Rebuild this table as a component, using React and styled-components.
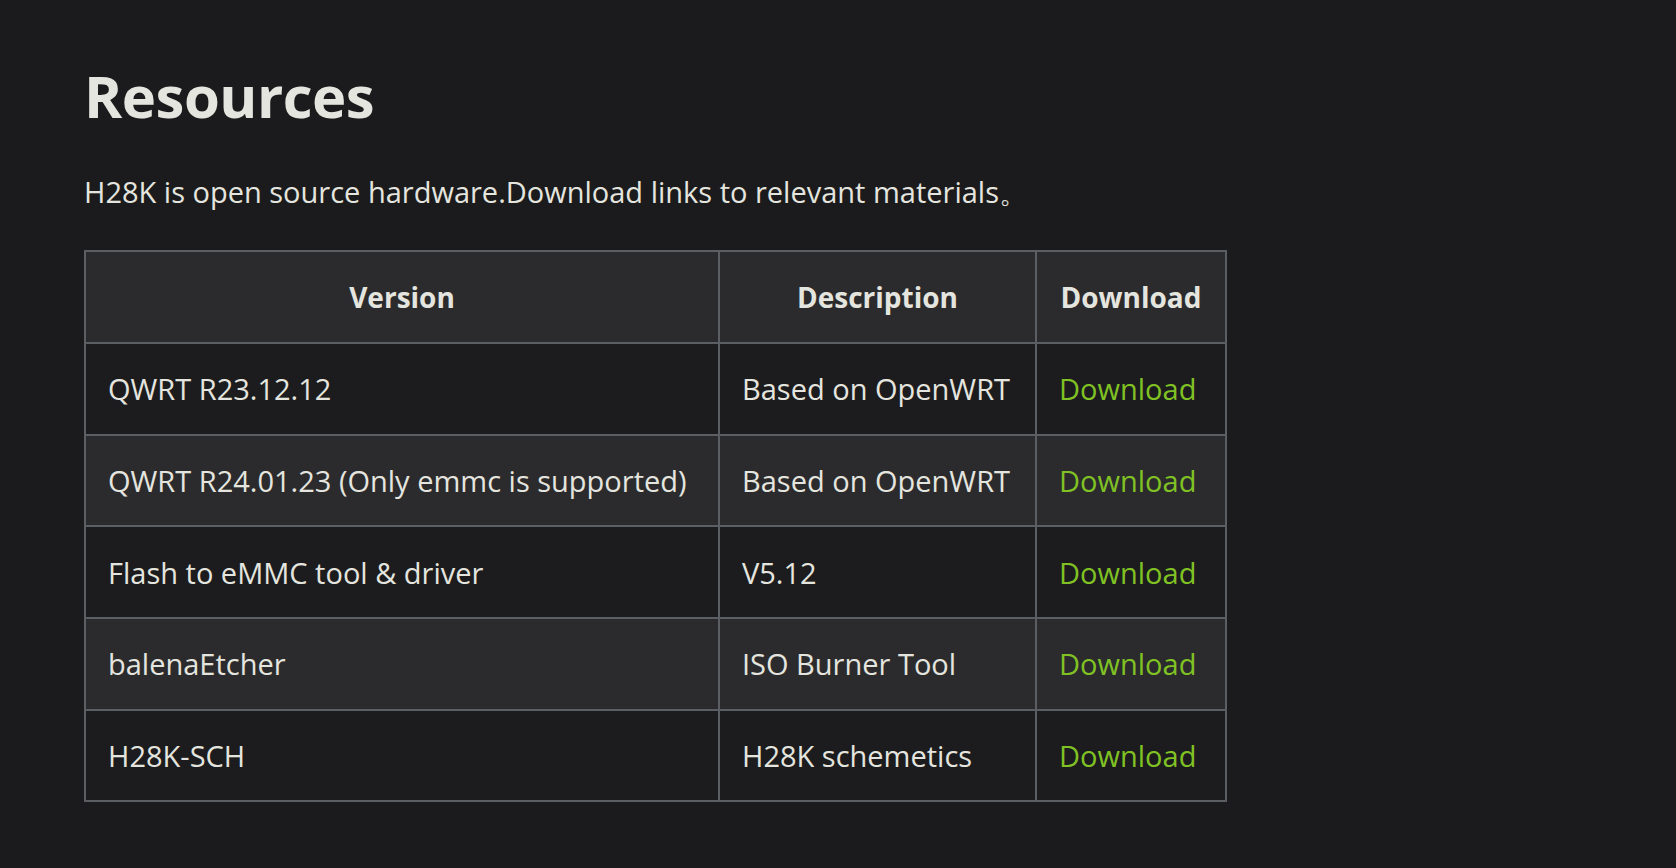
import React from 'react';
import styled, { createGlobalStyle } from 'styled-components';

const GlobalStyle = createGlobalStyle`
  html, body {
    margin: 0;
    padding: 0;
    background: #1b1b1d;
  }
  body {
    font-family: "Open Sans", "Noto Sans", sans-serif;
    color: #e5e5df;
  }
`;

const Page = styled.main`
  min-height: 100vh;
  padding: 56px 0 0 84px;
  box-sizing: border-box;
`;

const Title = styled.h1`
  margin: 0;
  font-size: 58px;
  line-height: 80px;
  font-weight: 700;
  letter-spacing: -0.5px;
`;

const Intro = styled.p`
  margin: 32px 0 34px;
  font-size: 29px;
  line-height: 48px;
`;

const Table = styled.table`
  border-collapse: collapse;
  table-layout: fixed;
  width: 1141px;
  font-size: 29px;
`;

const HeadCell = styled.th`
  height: 90px;
  padding: 0 22px;
  background: #2b2b2e;
  border: 2px solid #5b5f64;
  font-weight: 700;
  font-size: 28px;
  text-align: center;
  white-space: nowrap;
`;

const Row = styled.tr`
  background: ${p => (p.striped ? '#2b2b2e' : '#1c1c1f')};
`;

const Cell = styled.td`
  height: 89.7px;
  padding: 0 22px;
  border: 2px solid #5b5f64;
  white-space: nowrap;
`;

const Link = styled.a`
  color: #80c223;
  text-decoration: none;
`;

const rows = [
  ['QWRT R23.12.12', 'Based on OpenWRT'],
  ['QWRT R24.01.23 (Only emmc is supported)', 'Based on OpenWRT'],
  ['Flash to eMMC tool & driver', 'V5.12'],
  ['balenaEtcher', 'ISO Burner Tool'],
  ['H28K-SCH', 'H28K schemetics'],
];

export default function App() {
  return (
    <>
      <GlobalStyle />
      <Page>
        <Title>Resources</Title>
        <Intro>H28K is open source hardware.Download links to relevant materials。</Intro>
        <Table>
          <colgroup>
            <col style={{ width: 634 }} />
            <col style={{ width: 317 }} />
            <col style={{ width: 190 }} />
          </colgroup>
          <thead>
            <tr>
              <HeadCell>Version</HeadCell>
              <HeadCell>Description</HeadCell>
              <HeadCell>Download</HeadCell>
            </tr>
          </thead>
          <tbody>
            {rows.map(([version, desc], i) => (
              <Row key={version} striped={i % 2 === 1}>
                <Cell>{version}</Cell>
                <Cell>{desc}</Cell>
                <Cell>
                  <Link href="#">Download</Link>
                </Cell>
              </Row>
            ))}
          </tbody>
        </Table>
      </Page>
    </>
  );
}
